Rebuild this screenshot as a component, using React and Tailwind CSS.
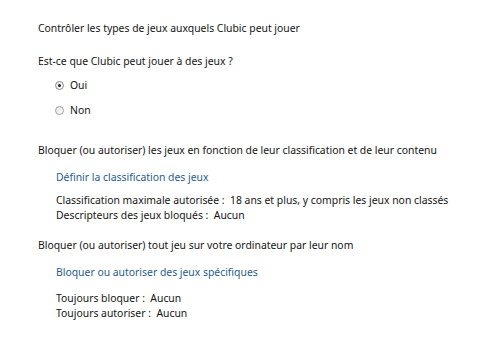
export default function App() {
  const font = { fontFamily: '"Noto Sans", "Open Sans", sans-serif' };
  return (
    <div className="w-[480px] h-[350px] bg-white text-[10.4px] leading-[15px] text-[#141414]" style={font}>
      <div className="pl-[38px] pt-[21px]">
        <p>Contrôler les types de jeux auxquels Clubic peut jouer</p>
        <p className="mt-[18px]">Est-ce que Clubic peut jouer à des jeux ?</p>
        <div className="pl-[17px] mt-[9px] flex flex-col gap-[10px]">
          <label className="flex items-center gap-[6px]">
            <span className="w-[9px] h-[9px] rounded-full border border-[#8a8a8a] bg-gradient-to-br from-[#e4e4e4] to-white flex items-center justify-center">
              <span className="w-[3px] h-[3px] rounded-full bg-[#222]" />
            </span>
            Oui
          </label>
          <label className="flex items-center gap-[6px]">
            <span className="w-[9px] h-[9px] rounded-full border border-[#a0a0a0] bg-gradient-to-br from-[#e4e4e4] to-white" />
            Non
          </label>
        </div>
        <p className="mt-[25px]">Bloquer (ou autoriser) les jeux en fonction de leur classification et de leur contenu</p>
        <div className="pl-[18px]">
          <p className="mt-[12px] text-[#1f5c8c]">Définir la classification des jeux</p>
          <p className="mt-[8px]">Classification maximale autorisée :&nbsp; 18 ans et plus, y compris les jeux non classés</p>
          <p>Descripteurs des jeux bloqués :&nbsp; Aucun</p>
        </div>
        <p className="mt-[15px]">Bloquer (ou autoriser) tout jeu sur votre ordinateur par leur nom</p>
        <div className="pl-[18px]">
          <p className="mt-[12px] text-[#1f5c8c]">Bloquer ou autoriser des jeux spécifiques</p>
          <p className="mt-[11px]">Toujours bloquer :&nbsp; Aucun</p>
          <p>Toujours autoriser :&nbsp; Aucun</p>
        </div>
      </div>
    </div>
  );
}
